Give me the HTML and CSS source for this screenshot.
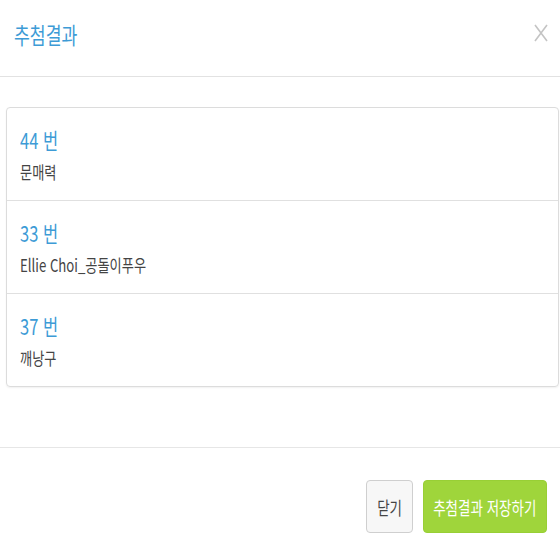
FILE: index.html
```html
<!DOCTYPE html>
<html lang="ko">
<head>
<meta charset="utf-8">
<link rel="stylesheet" href="styles.css">
</head>
<body>
<div class="modal">
  <div class="header">
    <span class="title"><span class="sq">추첨결과</span></span>
    <span class="close"><svg width="14" height="18" viewBox="0 0 14 18"><path d="M1 1 L13 17 M13 1 L1 17" stroke="#c4c4c4" stroke-width="1.6" fill="none"/></svg></span>
  </div>
  <div class="body">
    <div class="list">
      <div class="item">
        <div class="num"><span class="sq">44 번</span></div>
        <div class="name"><span class="sq">문매력</span></div>
      </div>
      <div class="item">
        <div class="num"><span class="sq">33 번</span></div>
        <div class="name"><span class="sq">Ellie Choi_공돌이푸우</span></div>
      </div>
      <div class="item">
        <div class="num"><span class="sq">37 번</span></div>
        <div class="name"><span class="sq">깨낭구</span></div>
      </div>
    </div>
  </div>
  <div class="footer">
    <button class="btn btn-close"><span class="sqc">닫기</span></button>
    <button class="btn btn-save"><span class="sqc">추첨결과 저장하기</span></button>
  </div>
</div>
</body>
</html>
```
FILE: styles.css
```css
html, body {
  margin: 0;
  padding: 0;
  background: #fff;
}
body {
  font-family: "Noto Sans CJK KR", "Noto Sans", sans-serif;
  width: 560px;
  height: 560px;
  overflow: hidden;
}
.sq {
  display: inline-block;
  transform: scaleX(0.75);
  transform-origin: left center;
  white-space: nowrap;
}
.sqc {
  display: inline-block;
  transform: scaleX(0.75);
  transform-origin: center center;
  white-space: nowrap;
}
.header {
  height: 77px;
  border-bottom: 1px solid #e2e2e2;
  display: flex;
  align-items: center;
  justify-content: space-between;
  padding: 0 12px 0 14px;
  box-sizing: border-box;
}
.title {
  color: #3d9bd6;
  font-size: 23px;
  line-height: 24px;
  margin-top: -8px;
}
.close {
  display: flex;
  margin-top: -10px;
}
.body {
  padding: 30px 1px 0 6px;
  height: 371px;
  box-sizing: border-box;
  border-bottom: 1px solid #e6e6e6;
}
.list {
  border: 1px solid #dcdcdc;
  border-radius: 4px;
  box-shadow: 0 1px 2px rgba(0,0,0,0.06);
}
.item {
  height: 93px;
  box-sizing: border-box;
  padding: 17px 13px 0;
  border-top: 1px solid #e0e0e0;
}
.item:first-child {
  height: 92px;
  border-top: none;
}
.num {
  color: #3d9bd6;
  font-size: 22px;
  line-height: 28px;
}
.name {
  color: #444;
  font-size: 17.6px;
  line-height: 22px;
  margin-top: 8px;
}
.footer {
  display: flex;
  justify-content: flex-end;
  gap: 10px;
  padding: 32px 13px 0 0;
}
.btn {
  font-family: "Noto Sans CJK KR", "Noto Sans", sans-serif;
  height: 53px;
  border-radius: 4px;
  font-size: 18px;
  padding: 0;
  cursor: pointer;
  display: flex;
  align-items: center;
  justify-content: center;
}
.btn-close {
  width: 47px;
  background: #f7f7f7;
  border: 1px solid #cfcfcf;
  color: #444;
}
.btn-save {
  width: 124px;
  background: #9fd53b;
  border: 1px solid #98cf35;
  color: #fff;
}
```
